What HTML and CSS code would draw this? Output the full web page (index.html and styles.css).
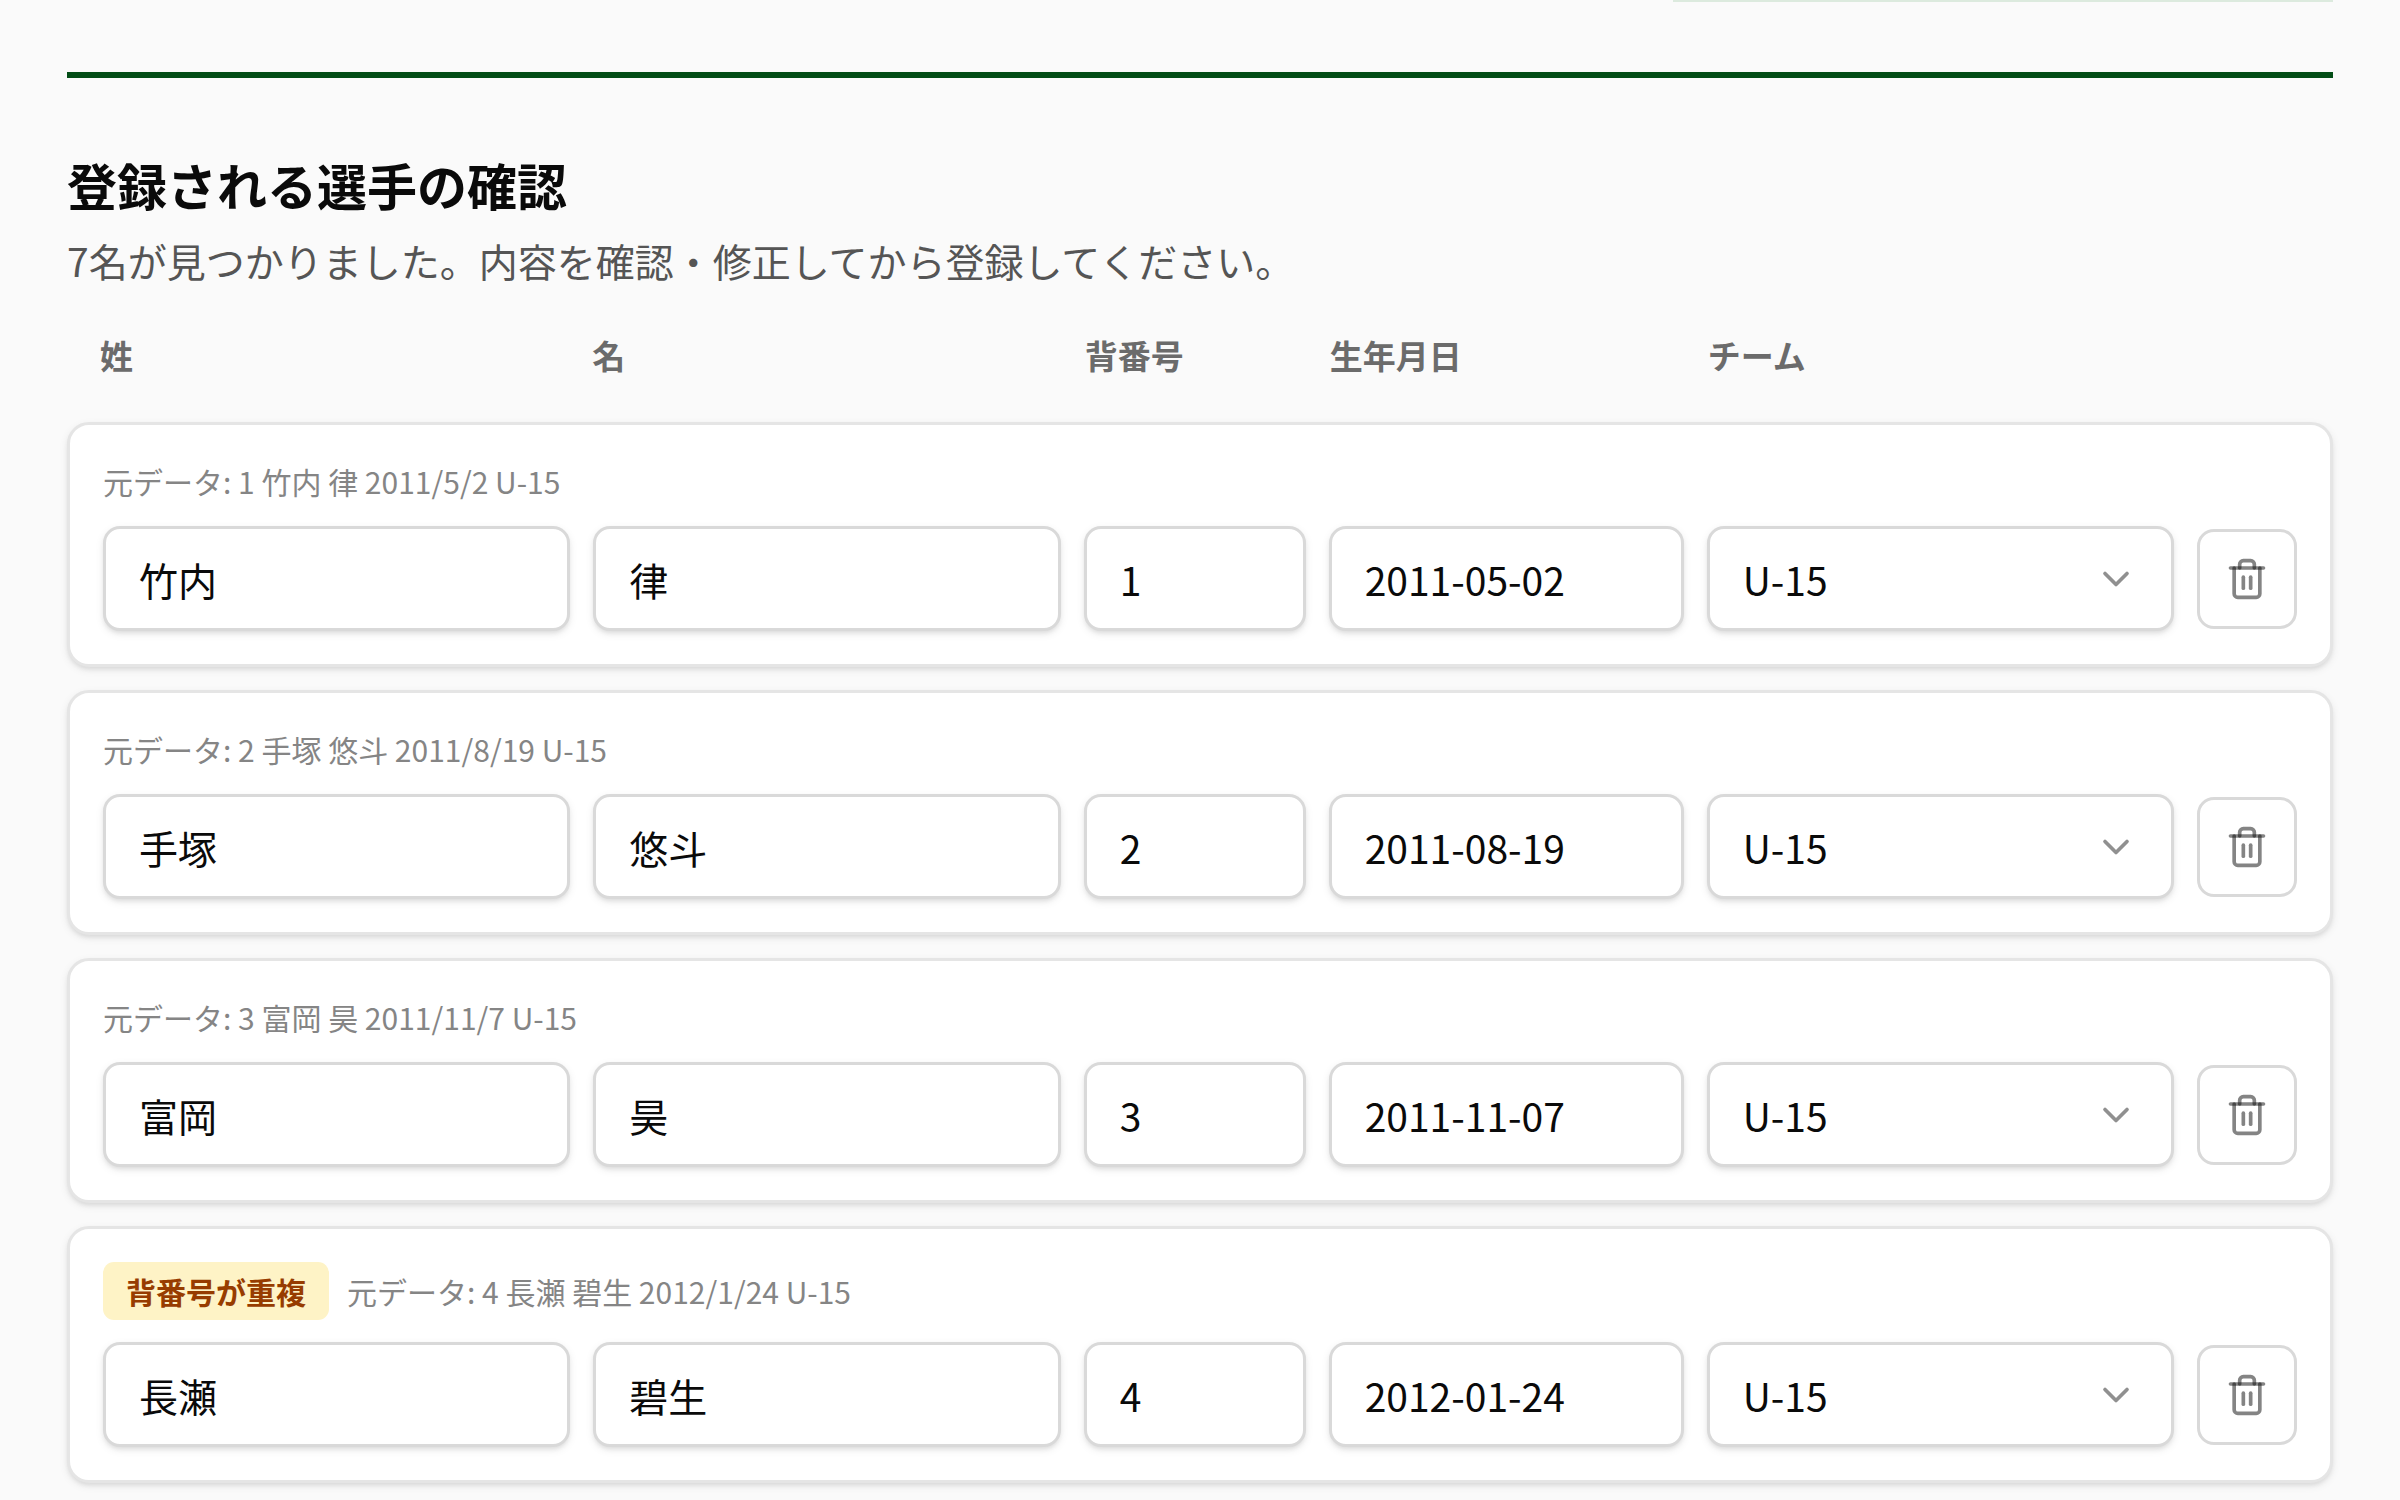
FILE: index.html
```
<!DOCTYPE html>
<html lang="ja">
<head>
<meta charset="utf-8">
<meta name="viewport" content="width=device-width, initial-scale=1">
<title>登録される選手の確認</title>
<link rel="stylesheet" href="styles.css">
</head>
<body>
<svg class="sprite" aria-hidden="true">
  <symbol id="trash" viewBox="0 0 24 24">
    <path d="M10 11v6"/><path d="M14 11v6"/><path d="M19 6v14a2 2 0 0 1-2 2H7a2 2 0 0 1-2-2V6"/><path d="M3 6h18"/><path d="M8 6V4a2 2 0 0 1 2-2h4a2 2 0 0 1 2 2v2"/>
  </symbol>
  <symbol id="chevron" viewBox="0 0 24 24"><path d="m6 9 6 6 6-6"/></symbol>
</svg>
<main class="page">
  <div class="previous-edge"></div>
  <section class="review">
    <h2 class="title">登録される選手の確認</h2>
    <p class="lead">7名が見つかりました。内容を確認・修正してから登録してください。</p>
    <div class="columns head">
      <span id="c-sei">姓</span><span id="c-mei">名</span><span id="c-no">背番号</span><span id="c-dob">生年月日</span><span id="c-team">チーム</span>
    </div>
    <ul class="players">
      <li class="card">
        <p class="source">元データ: 1 竹内 律 2011/5/2 U-15</p>
        <div class="columns">
          <input class="field" aria-labelledby="c-sei" value="竹内">
          <input class="field" aria-labelledby="c-mei" value="律">
          <input class="field" aria-labelledby="c-no" value="1">
          <input class="field" aria-labelledby="c-dob" value="2011-05-02">
          <div class="picker"><select class="field" aria-labelledby="c-team"><option>U-15</option></select><svg class="icon chevron"><use href="#chevron"/></svg></div>
          <button class="delete" type="button" aria-label="削除"><svg class="icon"><use href="#trash"/></svg></button>
        </div>
      </li>
      <li class="card">
        <p class="source">元データ: 2 手塚 悠斗 2011/8/19 U-15</p>
        <div class="columns">
          <input class="field" aria-labelledby="c-sei" value="手塚">
          <input class="field" aria-labelledby="c-mei" value="悠斗">
          <input class="field" aria-labelledby="c-no" value="2">
          <input class="field" aria-labelledby="c-dob" value="2011-08-19">
          <div class="picker"><select class="field" aria-labelledby="c-team"><option>U-15</option></select><svg class="icon chevron"><use href="#chevron"/></svg></div>
          <button class="delete" type="button" aria-label="削除"><svg class="icon"><use href="#trash"/></svg></button>
        </div>
      </li>
      <li class="card">
        <p class="source">元データ: 3 富岡 昊 2011/11/7 U-15</p>
        <div class="columns">
          <input class="field" aria-labelledby="c-sei" value="富岡">
          <input class="field" aria-labelledby="c-mei" value="昊">
          <input class="field" aria-labelledby="c-no" value="3">
          <input class="field" aria-labelledby="c-dob" value="2011-11-07">
          <div class="picker"><select class="field" aria-labelledby="c-team"><option>U-15</option></select><svg class="icon chevron"><use href="#chevron"/></svg></div>
          <button class="delete" type="button" aria-label="削除"><svg class="icon"><use href="#trash"/></svg></button>
        </div>
      </li>
      <li class="card">
        <p class="source"><span class="badge">背番号が重複</span>元データ: 4 長瀬 碧生 2012/1/24 U-15</p>
        <div class="columns">
          <input class="field" aria-labelledby="c-sei" value="長瀬">
          <input class="field" aria-labelledby="c-mei" value="碧生">
          <input class="field" aria-labelledby="c-no" value="4">
          <input class="field" aria-labelledby="c-dob" value="2012-01-24">
          <div class="picker"><select class="field" aria-labelledby="c-team"><option>U-15</option></select><svg class="icon chevron"><use href="#chevron"/></svg></div>
          <button class="delete" type="button" aria-label="削除"><svg class="icon"><use href="#trash"/></svg></button>
        </div>
      </li>
    </ul>
  </section>
</main>
</body>
</html>
```
FILE: styles.css
```
* {
  box-sizing: border-box;
}

body {
  margin: 0;
  background: #fafafa;
  color: #0a0a0a;
  font-family: "Noto Sans CJK JP", sans-serif;
  font-size: 39px;
}

.sprite {
  display: none;
}

.page {
  padding: 0 67px 16px;
}

/* bottom edge of the panel that precedes the review */
.previous-edge {
  width: 660px;
  height: 2px;
  margin-left: auto;
  background: #dceade;
}

.review {
  margin-top: 70px;
  padding-top: 75px;
  border-top: 6px solid #034d16;
}

.title {
  margin: 0;
  font-size: 50px;
  line-height: 62px;
  font-weight: 700;
}

.lead {
  margin: 17px 0 0;
  line-height: 56px;
  color: #555;
}

.columns {
  display: grid;
  grid-template-columns: 1fr 1fr 222px 355px 1fr 100px;
  gap: 23px;
  align-items: center;
}

.head {
  margin-top: 45px;
  padding: 0 33px;
  font-size: 33px;
  line-height: 44px;
  font-weight: 700;
  color: #6b6b6b;
}

.players {
  display: grid;
  gap: 23px;
  margin: 45px 0 0;
  padding: 0;
  list-style: none;
}

.card {
  padding: 33px;
  background: #fff;
  border: 3px solid #e5e5e5;
  border-radius: 22px;
  box-shadow: 0 3px 8px rgb(0 0 0 / 8%), 0 3px 4px -1px rgb(0 0 0 / 8%);
}

.source {
  display: flex;
  align-items: center;
  gap: 18px;
  margin: 0 0 22px;
  font-size: 30px;
  line-height: 46px;
  color: #858585;
}

.badge {
  padding: 6px 23px;
  border-radius: 11px;
  background: #fef3c6;
  color: #973c00;
  font-weight: 700;
}

.field {
  width: 100%;
  min-width: 0;
  height: 105px;
  padding: 0 33px;
  border: 3px solid #d9d9d9;
  border-radius: 17px;
  background: #fff;
  color: #0a0a0a;
  font: inherit;
  box-shadow: 0 3px 8px rgb(0 0 0 / 8%), 0 3px 4px -1px rgb(0 0 0 / 8%);
}

.picker {
  display: grid;
  align-items: center;
}

.picker > * {
  grid-area: 1 / 1;
}

select.field {
  appearance: none;
}

.icon {
  width: 44px;
  height: 44px;
  fill: none;
  stroke: rgb(10 10 10 / 50%);
  stroke-width: 2;
  stroke-linecap: round;
  stroke-linejoin: round;
}

.chevron {
  justify-self: end;
  margin-right: 36px;
  stroke: #909090;
  pointer-events: none;
}

.delete {
  display: grid;
  place-items: center;
  width: 100px;
  height: 100px;
  padding: 0;
  border: 3px solid #d9d9d9;
  border-radius: 17px;
  background: #fff;
}
```
